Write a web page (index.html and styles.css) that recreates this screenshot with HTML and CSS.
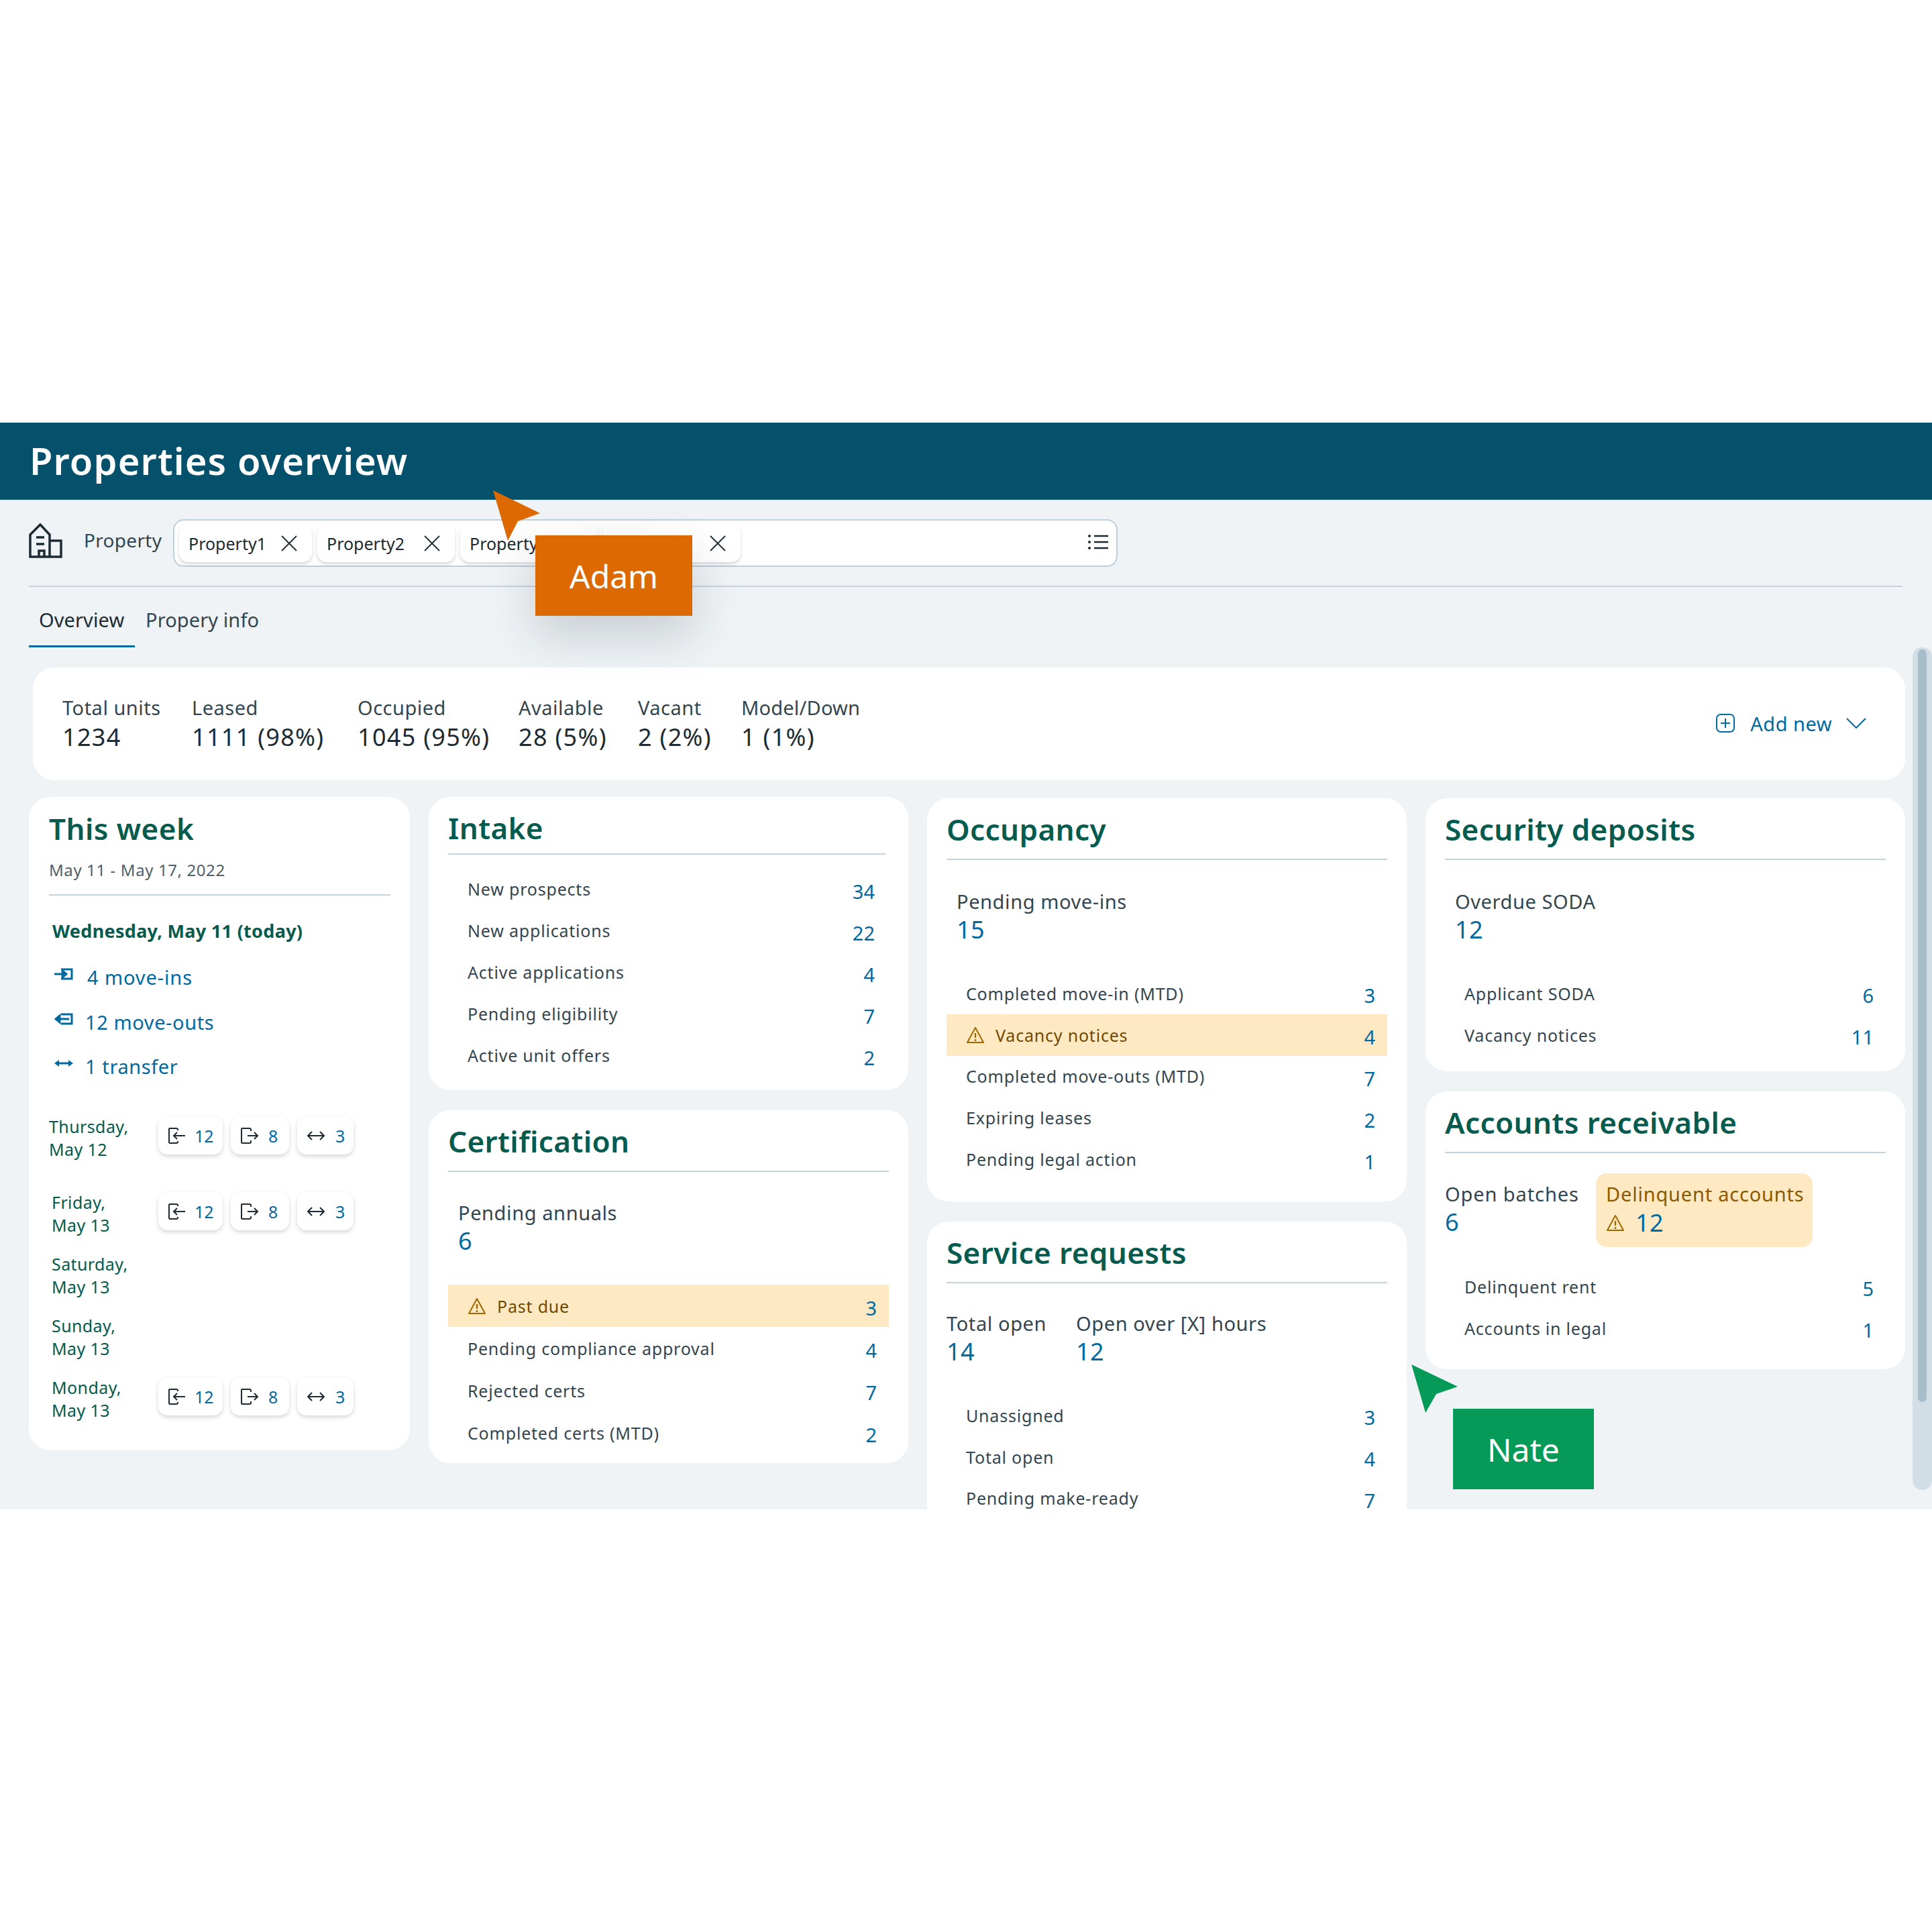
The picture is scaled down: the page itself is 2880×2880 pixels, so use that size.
FILE: index.html
```html
<!DOCTYPE html>
<html lang="en">
<head>
<meta charset="utf-8">
<title>Properties overview</title>
<link rel="stylesheet" href="styles.css">
</head>
<body>
<svg class="sprites" width="0" height="0" aria-hidden="true">
  <symbol id="i-x" viewBox="0 0 24 24"><path d="M1 1l22 22M23 1L1 23" fill="none" stroke="currentColor" stroke-width="1.8"/></symbol>
  <symbol id="i-in" viewBox="0 0 28 26"><path d="M3 2h10a2 2 0 0 1 2 2v1M15 21v1a2 2 0 0 1-2 2H3a1.500 1.500 0 0 1-1-1V3a1 1 0 0 1 1-1M26 13H9M14 8l-5 5 5 5" fill="none" stroke="currentColor" stroke-width="2"/></symbol>
  <symbol id="i-out" viewBox="0 0 28 26"><path d="M16 6V4a2 2 0 0 0-2-2H3a1 1 0 0 0-1 1v20a1 1 0 0 0 1 1h11a2 2 0 0 0 2-2v-2M11 13h15M21 8l5 5-5 5" fill="none" stroke="currentColor" stroke-width="2"/></symbol>
  <symbol id="i-swap" viewBox="0 0 28 16"><path d="M2 8h24M8 2L2 8l6 6M20 2l6 6-6 6" fill="none" stroke="currentColor" stroke-width="2"/></symbol>
  <symbol id="i-warn" viewBox="0 0 28 28"><path d="M14 3L2 25h24z" fill="none" stroke="currentColor" stroke-width="2" stroke-linejoin="round"/><path d="M14 11v7" stroke="currentColor" stroke-width="2.400"/><circle cx="14" cy="21.500" r="1.500" fill="currentColor"/></symbol>
</svg>

<main class="frame">
  <header class="banner"><h1>Properties overview</h1></header>

  <section class="filter">
    <svg class="building" viewBox="0 0 50 52"><path d="M2 50V17L17 2l14 15v33zM31 26h17v24H2M11 21h12M11 31h12M15 50V41h8v9" fill="none" stroke="#1c2b33" stroke-width="3.500"/></svg>
    <span class="filter-label">Property</span>
    <div class="picker">
      <span class="tag tag-a">Property1<svg class="x"><use href="#i-x"/></svg></span>
      <span class="tag tag-b">Property2<svg class="x"><use href="#i-x"/></svg></span>
      <span class="tag tag-b">Property3<svg class="x"><use href="#i-x"/></svg></span>
      <span class="tag tag-b">Property4<svg class="x"><use href="#i-x"/></svg></span>
      <svg class="list-icon" viewBox="0 0 30 24"><path d="M9 3h21M9 12h21M9 21h21" stroke="#1c2b33" stroke-width="2.400"/><circle cx="2" cy="3" r="2" fill="#1c2b33"/><circle cx="2" cy="12" r="2" fill="#1c2b33"/><circle cx="2" cy="21" r="2" fill="#1c2b33"/></svg>
    </div>
  </section>

  <nav class="tabs">
    <span class="tab tab-active">Overview</span>
    <span class="tab">Propery info</span>
  </nav>

  <section class="stats">
    <div class="stat s1"><span>Total units</span><b>1234</b></div>
    <div class="stat s2"><span>Leased</span><b>1111 (98%)</b></div>
    <div class="stat s3"><span>Occupied</span><b>1045 (95%)</b></div>
    <div class="stat s4"><span>Available</span><b>28 (5%)</b></div>
    <div class="stat s5"><span>Vacant</span><b>2 (2%)</b></div>
    <div class="stat s6"><span>Model/Down</span><b>1 (1%)</b></div>
    <div class="add-new">
      <svg class="add-icon" viewBox="0 0 28 28"><rect x="1" y="1" width="26" height="26" rx="6" fill="none" stroke="currentColor" stroke-width="2"/><path d="M14 7v14M7 14h14" stroke="currentColor" stroke-width="2"/></svg>
      <span>Add new</span>
      <svg class="chev" viewBox="0 0 30 16"><path d="M1 1l14 14L29 1" fill="none" stroke="currentColor" stroke-width="2"/></svg>
    </div>
  </section>

  <div class="board">
    <div class="col col-week">
      <section class="card week">
        <h2>This week</h2>
        <p class="range">May 11 - May 17, 2022</p>
        <h3>Wednesday, May 11 (today)</h3>
        <ul class="today">
          <li><svg class="t-icon" viewBox="0 0 28 18"><path d="M10 2h16v14H10" fill="none" stroke="currentColor" stroke-width="3"/><path d="M0 9h16M12 4l6 5-6 5z" fill="currentColor" stroke="currentColor" stroke-width="3"/></svg><span class="t1">4 move-ins</span></li>
          <li><svg class="t-icon" viewBox="0 0 28 18"><path d="M10 2h16v14H10" fill="none" stroke="currentColor" stroke-width="3"/><path d="M22 9H6M8 4L2 9l6 5z" fill="currentColor" stroke="currentColor" stroke-width="3"/></svg><span>12 move-outs</span></li>
          <li><svg class="t-icon" viewBox="0 0 28 12"><path d="M6 6h16" stroke="currentColor" stroke-width="3"/><path d="M0 6l7-5v10zM28 6l-7-5v10z" fill="currentColor"/></svg><span>1 transfer</span></li>
        </ul>
        <div class="day day-first">
          <p class="day-name">Thursday,<br>May 12</p>
          <div class="pills">
            <span class="pill p-in"><svg class="pi"><use href="#i-in"/></svg>12</span>
            <span class="pill p-out"><svg class="pi"><use href="#i-out"/></svg>8</span>
            <span class="pill p-swap"><svg class="ps"><use href="#i-swap"/></svg>3</span>
          </div>
        </div>
        <div class="day">
          <p class="day-name indent">Friday,<br>May 13</p>
          <div class="pills">
            <span class="pill p-in"><svg class="pi"><use href="#i-in"/></svg>12</span>
            <span class="pill p-out"><svg class="pi"><use href="#i-out"/></svg>8</span>
            <span class="pill p-swap"><svg class="ps"><use href="#i-swap"/></svg>3</span>
          </div>
        </div>
        <div class="day"><p class="day-name indent">Saturday,<br>May 13</p></div>
        <div class="day"><p class="day-name indent">Sunday,<br>May 13</p></div>
        <div class="day">
          <p class="day-name indent">Monday,<br>May 13</p>
          <div class="pills">
            <span class="pill p-in"><svg class="pi"><use href="#i-in"/></svg>12</span>
            <span class="pill p-out"><svg class="pi"><use href="#i-out"/></svg>8</span>
            <span class="pill p-swap"><svg class="ps"><use href="#i-swap"/></svg>3</span>
          </div>
        </div>
      </section>
    </div>

    <div class="col col-mid">
      <section class="card intake">
        <h2>Intake</h2>
        <ul class="rows">
          <li><span>New prospects</span><b>34</b></li>
          <li><span>New applications</span><b>22</b></li>
          <li><span>Active applications</span><b>4</b></li>
          <li><span>Pending eligibility</span><b>7</b></li>
          <li><span>Active unit offers</span><b>2</b></li>
        </ul>
      </section>
      <section class="card cert">
        <h2>Certification</h2>
        <div class="metric"><span>Pending annuals</span><b>6</b></div>
        <ul class="rows">
          <li class="alert"><span><svg class="warn"><use href="#i-warn"/></svg>Past due</span><b>3</b></li>
          <li><span>Pending compliance approval</span><b>4</b></li>
          <li><span>Rejected certs</span><b>7</b></li>
          <li><span>Completed certs (MTD)</span><b>2</b></li>
        </ul>
      </section>
    </div>

    <div class="col col-low">
      <section class="card occ">
        <h2>Occupancy</h2>
        <div class="metric"><span>Pending move-ins</span><b>15</b></div>
        <ul class="rows">
          <li><span>Completed move-in (MTD)</span><b>3</b></li>
          <li class="alert"><span><svg class="warn"><use href="#i-warn"/></svg>Vacancy notices</span><b>4</b></li>
          <li><span>Completed move-outs (MTD)</span><b>7</b></li>
          <li><span>Expiring leases</span><b>2</b></li>
          <li><span>Pending legal action</span><b>1</b></li>
        </ul>
      </section>
      <section class="card service">
        <h2>Service requests</h2>
        <div class="metric-pair">
          <div class="metric-inline first"><span>Total open</span><b>14</b></div>
          <div class="metric-inline"><span>Open over [X] hours</span><b>12</b></div>
        </div>
        <ul class="rows">
          <li><span>Unassigned</span><b>3</b></li>
          <li><span>Total open</span><b>4</b></li>
          <li><span>Pending make-ready</span><b>7</b></li>
        </ul>
      </section>
    </div>

    <div class="col col-low">
      <section class="card deposits">
        <h2>Security deposits</h2>
        <div class="metric"><span>Overdue SODA</span><b>12</b></div>
        <ul class="rows">
          <li><span>Applicant SODA</span><b>6</b></li>
          <li><span>Vacancy notices</span><b>11</b></li>
        </ul>
      </section>
      <section class="card ar">
        <h2>Accounts receivable</h2>
        <div class="metric-pair">
          <div class="metric-inline open"><span>Open batches</span><b>6</b></div>
          <div class="metric-inline flagged"><span>Delinquent accounts</span><b><svg class="warn warn-big"><use href="#i-warn"/></svg>12</b></div>
        </div>
        <ul class="rows">
          <li><span>Delinquent rent</span><b>5</b></li>
          <li><span>Accounts in legal</span><b>1</b></li>
        </ul>
      </section>
    </div>
  </div>

  <div class="scrollbar"><div class="thumb"></div></div>

  <div class="cursor adam">
    <svg class="pointer" viewBox="0 0 70 75"><path d="M0 0L70 34 37 46 22 75z" fill="#dd6902"/></svg>
    <span class="name-tag">Adam</span>
  </div>
  <div class="cursor nate">
    <svg class="pointer" viewBox="0 0 70 75"><path d="M0 0L69 33 37 44 21 72z" fill="#069a58"/></svg>
    <span class="name-tag">Nate</span>
  </div>
</main>
</body>
</html>
```
FILE: styles.css
```css
* { box-sizing: border-box; }
html, body { margin: 0; padding: 0; background: #fff; }
body { font-family: "Noto Sans", "Liberation Sans", sans-serif; color: #33454f; }
h1, h2, h3, p, ul { margin: 0; padding: 0; list-style: none; }
b { font-weight: 400; }
.sprites { position: absolute; }

.frame { position: relative; margin-top: 630px; height: 1620px; background: #eff3f6; overflow: hidden; }

.banner { height: 115px; padding-left: 44px; background: #05506a; display: flex; align-items: center; }
.banner h1 { font-size: 56px; font-weight: 600; color: #fff; line-height: 60px; letter-spacing: 1.1px; margin-top: -4px; }

.filter { margin: 0 44px 0 43px; height: 130px; padding-top: 29px; border-bottom: 2px solid #c4d4de; display: flex; align-items: flex-start; }
.building { width: 50px; height: 52px; margin-top: 6px; flex: none; }
.filter-label { width: 165px; flex: none; padding-left: 32px; font-size: 28px; line-height: 62px; letter-spacing: .3px; color: #33454f; }
.picker { width: 1408px; height: 71px; padding: 5px 7px; background: #fff; border: 2px solid #bccfdb; border-radius: 16px; display: flex; align-items: flex-start; gap: 8px; flex: none; }
.tag { height: 57px; padding-left: 14px; background: #fff; border-radius: 14px; box-shadow: 0 3px 5px rgba(40, 60, 75, .2); font-size: 25px; color: #1c2b33; display: flex; align-items: center; justify-content: space-between; padding-right: 22px; }
.tag-a { width: 198px; }
.tag-b { width: 205px; }
.x { width: 24px; height: 24px; color: #1c2b33; }
.list-icon { width: 30px; height: 24px; margin-left: auto; margin-top: 15px; margin-right: 5px; }

.tabs { height: 90px; margin-left: 43px; display: flex; }
.tab { padding: 0 16px; font-size: 29px; line-height: 97px; height: 90px; color: #33454f; letter-spacing: .1px; }
.tab-active { width: 158px; padding: 0 0 0 15px; color: #1c2b33; border-bottom: 3px solid #0069a0; }

.stats { margin: 30px 40px 0 49px; height: 168px; padding: 0 58px 0 44px; background: #fff; border-radius: 32px; display: flex; align-items: center; }
.stat { display: flex; flex-direction: column; flex: none; margin-top: -4px; }
.stat span { font-size: 29px; line-height: 42px; letter-spacing: .5px; }
.stat b { font-size: 36px; line-height: 42px; margin-top: 2px; letter-spacing: 1.3px; color: #1c2b33; }
.s1 { width: 193px; } .s2 { width: 247px; } .s3 { width: 240px; } .s4 { width: 178px; } .s5 { width: 154px; }
.s6 span { letter-spacing: .2px; }
.add-new { margin-left: auto; margin-top: -2px; display: flex; align-items: center; color: #0069a0; font-size: 29px; letter-spacing: .5px; }
.add-icon { width: 28px; height: 28px; margin-right: 23px; }
.chev { width: 30px; height: 16px; margin-left: 21px; }

.board { margin: 25px 0 0 43px; display: flex; gap: 28px; align-items: flex-start; }
.col { display: flex; flex-direction: column; flex: none; }
.col-week { width: 568px; }
.col-mid { width: 715px; gap: 30px; }
.col-low { width: 715px; padding-top: 2px; gap: 30px; }
.card { background: #fff; border-radius: 32px; padding: 0 29px; }
.card h2 { height: 92px; font-size: 44px; line-height: 92px; font-weight: 600; letter-spacing: .4px; color: #055b4e; border-bottom: 2px solid #c4d4de; }

.rows li { height: 61.8px; display: flex; justify-content: space-between; align-items: center; padding: 0 18px 0 29px; font-size: 25px; letter-spacing: .8px; color: #33454f; }
.rows b { font-size: 29px; letter-spacing: 0; color: #0069a0; padding-top: 6px; }
.alert { background: #ffe9c2; color: #6f4a00 !important; }
.alert span { display: flex; align-items: center; }
.warn { width: 28px; height: 28px; color: #a06a00; margin-right: 16px; }

.metric { margin: 41px 0 43px 15px; display: flex; flex-direction: column; }
.metric span, .metric-inline span { font-size: 29px; line-height: 42px; letter-spacing: .6px; }
.metric b, .metric-inline b { font-size: 36px; line-height: 42px; letter-spacing: .5px; color: #0069a0; display: flex; align-items: center; }

.intake { height: 437px; padding-right: 34px; }
.intake h2 { height: 86px; line-height: 92px; margin-bottom: 20px; }
.intake .rows li { height: 62px; padding-right: 16px; }
.cert { height: 526px; }
.cert .metric { margin-top: 40px; margin-bottom: 44px; }
.cert .rows li { height: 63px; }
.occ { height: 601px; }
.service { height: 500px; }
.deposits { height: 407px; }
.ar { height: 414px; }

.metric-pair { display: flex; }
.service .metric-pair { margin: 39px 0 43px; }
.ar .metric-pair { margin: 30px 0 28px; }
.metric-inline { display: flex; flex-direction: column; flex: none; }
.metric-inline.first { width: 193px; }
.metric-inline.open { width: 225px; padding-top: 10px; }
.metric-inline.open span { letter-spacing: .9px; }
.flagged { width: 323px; padding: 10px 15px 15px; background: #ffe9c2; border-radius: 16px; }
.flagged span { color: #8a5a00; letter-spacing: .8px; white-space: nowrap; }
.flagged b { margin-top: 1px; }
.warn-big { margin-right: 16px; }

.week { padding: 0 29px 43px 30px; }
.week h2 { height: 94px; border-bottom: 0; line-height: 94px; }
.range { font-size: 24px; line-height: 30px; height: 53px; letter-spacing: .6px; border-bottom: 2px solid #c4d4de; color: #4e6069; }
.week h3 { margin: 36px 0 0 5px; font-size: 27px; line-height: 34px; font-weight: 700; letter-spacing: .3px; color: #055b4e; }
.today { margin: 18px 0 0 8px; color: #0069a0; font-size: 29px; letter-spacing: .6px; }
.today li { height: 66px; display: flex; align-items: center; }
.today li + li { padding-top: 2px; }
.t-icon { width: 28px; height: 18px; margin-right: 18px; margin-top: -8px; flex: none; }
.t1 { margin-left: 3px; letter-spacing: .9px; }
.day { display: flex; align-items: flex-start; margin-top: 24px; }
.day-first { margin-top: 41px; margin-bottom: 45px; }
.day-first + .day { margin-top: 0; }
.day-name { width: 163px; font-size: 25px; line-height: 34px; letter-spacing: .4px; color: #055b4e; flex: none; }
.day-name.indent { padding-left: 4px; }
.pills { display: flex; gap: 12px; margin-top: 2px; }
.pill { height: 57px; border-radius: 14px; background: #fff; box-shadow: 0 3px 6px rgba(40, 60, 75, .2); display: flex; align-items: center; font-size: 25px; color: #0069a0; padding-left: 14px; }
.p-in { width: 96px; }
.p-out { width: 87px; }
.p-swap { width: 84px; }
.pi { width: 28px; height: 26px; color: #1c2b33; margin-right: 12px; }
.p-out .pi { margin-right: 14px; }
.ps { width: 28px; height: 16px; color: #1c2b33; margin-right: 15px; }

.scrollbar { position: absolute; top: 335px; right: 0; width: 29px; height: 1256px; padding: 3px 8px; background: #d2dee6; border-radius: 14px; }
.thumb { height: 1122px; background: #a6bdca; border-radius: 8px; }

.cursor { position: absolute; }
.pointer { position: absolute; left: 0; top: 0; width: 70px; height: 75px; display: block; }
.name-tag { position: absolute; display: flex; align-items: center; justify-content: center; color: #fff; font-size: 48px; }
.adam { left: 735px; top: 101px; }
.adam .name-tag { left: 63px; top: 67px; width: 234px; height: 120px; background: #dd6902; box-shadow: 0 30px 70px rgba(30, 40, 50, .18); }
.nate { left: 2104px; top: 1404px; }
.nate .name-tag { left: 62px; top: 66px; width: 210px; height: 120px; background: #069a58; }
```
